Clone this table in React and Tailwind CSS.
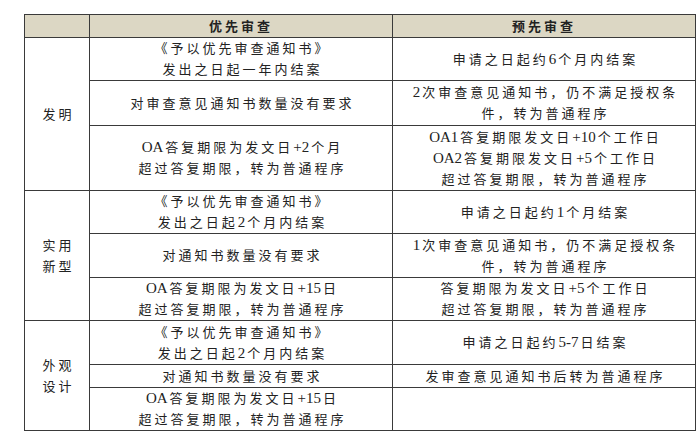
const rows = [
  {
    label: ["发明"],
    cells: [
      [["《予以优先审查通知书》", "发出之日起一年内结案"], ["申请之日起约6个月内结案"]],
      [["对审查意见通知书数量没有要求"], ["2次审查意见通知书，仍不满足授权条", "件，转为普通程序"]],
      [
        ["OA答复期限为发文日+2个月", "超过答复期限，转为普通程序"],
        ["OA1答复期限发文日+10个工作日", "OA2答复期限发文日+5个工作日", "超过答复期限，转为普通程序"],
      ],
    ],
  },
  {
    label: ["实用", "新型"],
    cells: [
      [["《予以优先审查通知书》", "发出之日起2个月内结案"], ["申请之日起约1个月结案"]],
      [["对通知书数量没有要求"], ["1次审查意见通知书，仍不满足授权条", "件，转为普通程序"]],
      [["OA答复期限为发文日+15日", "超过答复期限，转为普通程序"], ["答复期限为发文日+5个工作日", "超过答复期限，转为普通程序"]],
    ],
  },
  {
    label: ["外观", "设计"],
    cells: [
      [["《予以优先审查通知书》", "发出之日起2个月内结案"], ["申请之日起约5-7日结案"]],
      [["对通知书数量没有要求"], ["发审查意见通知书后转为普通程序"]],
      [["OA答复期限为发文日+15日", "超过答复期限，转为普通程序"], []],
    ],
  },
];

// latin runs are set in Times-like glyphs without the wide CJK tracking
const Mixed = ({ text }) =>
  text.split(/([A-Za-z0-9+\-]+)/).map((part, i) =>
    /^[A-Za-z0-9+\-]+$/.test(part) ? (
      <span key={i} className="pr-[2px] text-[15px] tracking-normal">
        {part}
      </span>
    ) : (
      <span key={i}>{part}</span>
    )
  );

const Lines = ({ lines }) => (
  <div className="flex flex-col items-center">
    {lines.map((t) => (
      <span key={t} className="whitespace-nowrap pl-[3px]">
        <Mixed text={t} />
      </span>
    ))}
  </div>
);

export default function App() {
  return (
    <div
      className="min-h-screen bg-white pl-[24px] pt-[14px] text-[13px] leading-[21px] tracking-[3px] text-[#222]"
      style={{ fontFamily: '"Liberation Serif", "Noto Sans CJK SC", serif' }}
    >
      <div className="grid w-[672px] grid-cols-[64px_302px_302px] grid-rows-[22px_42px_44px_64px_42px_43px_42px_43px_22px_42px] gap-px border border-[#3a3a3a] bg-[#3a3a3a]">
        <div className="bg-[#dcd7c4]" />
        <div className="flex items-center justify-center bg-[#dcd7c4] font-bold">优先审查</div>
        <div className="flex items-center justify-center bg-[#dcd7c4] font-bold">预先审查</div>

        {rows.map((group, gi) => (
          <div key={gi} className="contents">
            <div
              className={`flex items-center justify-center bg-white ${
                gi === 0 ? "row-[2/5]" : gi === 1 ? "row-[5/8]" : "row-[8/11]"
              } col-[1]`}
            >
              <Lines lines={group.label} />
            </div>
            {group.cells.map((pair, ri) => (
              <div key={ri} className="contents">
                <div className="col-[2] flex items-center justify-center bg-white">
                  <Lines lines={pair[0]} />
                </div>
                <div className="col-[3] flex items-center justify-center bg-white">
                  <Lines lines={pair[1]} />
                </div>
              </div>
            ))}
          </div>
        ))}
      </div>
    </div>
  );
}
